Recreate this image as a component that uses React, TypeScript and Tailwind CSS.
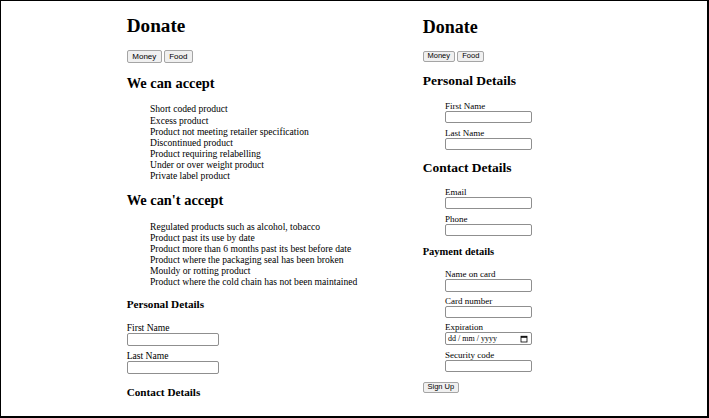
const serif = "font-['Liberation_Serif','Times_New_Roman',serif]";

const leftItemsCan = [
  'Short coded product',
  'Excess product',
  'Product not meeting retailer specification',
  'Discontinued product',
  'Product requiring relabelling',
  'Under or over weight product',
  'Private label product',
];

const leftItemsCant = [
  'Regulated products such as alcohol, tobacco',
  'Product past its use by date',
  'Product more than 6 months past its best before date',
  'Product where the packaging seal has been broken',
  'Mouldy or rotting product',
  'Product where the cold chain has not been maintained',
];

// left screenshot is rendered a bit bigger than the right one
const btnLeft =
  "h-[12.4px] px-[4.6px] bg-[#f0f0f0] border border-[#a5a5a5] rounded-[2px] text-[8px] leading-[9px] text-black font-['Liberation_Sans',Arial,sans-serif]";
const btnRight =
  "h-[11.4px] px-[3.8px] bg-[#f0f0f0] border border-[#a5a5a5] rounded-[2px] text-[7.5px] leading-[8px] text-black font-['Liberation_Sans',Arial,sans-serif]";
const inputLeft = 'block w-[92.5px] h-[12.4px] bg-white border border-[#8f8f8f] rounded-[2px] outline-none';
const inputRight = 'block w-[86.7px] h-[12.3px] bg-white border border-[#8f8f8f] rounded-[2px] outline-none';

function RightField({ label, mt }: { label: string; mt: string }) {
  return (
    <div className={mt}>
      <div className="text-[9px] leading-[10px]">{label}</div>
      <input type="text" className={inputRight} />
    </div>
  );
}

function CalendarIcon() {
  return (
    <svg width="8" height="8" viewBox="0 0 16 16" fill="none">
      <rect x="2" y="2.5" width="12" height="11.5" stroke="black" strokeWidth="1.6" />
      <rect x="2" y="2.5" width="12" height="3" fill="black" />
    </svg>
  );
}

export default function App() {
  return (
    <div className={`w-[709px] h-[418px] bg-white text-black border-l border-t border-r-2 border-b-2 border-black overflow-hidden flex ${serif}`}>
      {/* left page: food form */}
      <div className="w-[296px] shrink-0 pl-[125.7px] whitespace-nowrap flex flex-col items-start">
        <h1 className="mt-[14.2px] text-[19.2px] leading-[22px] font-bold">Donate</h1>
        <div className="mt-[13.1px] flex gap-[1.7px]">
          <button className={btnLeft}>Money</button>
          <button className={btnLeft}>Food</button>
        </div>
        <h2 className="mt-[12.2px] text-[14.4px] leading-[17px] font-bold">We can accept</h2>
        <ul className="mt-[11.6px] pl-[23.3px] text-[9.6px] leading-[11.04px]">
          {leftItemsCan.map((item) => (
            <li key={item}>{item}</li>
          ))}
        </ul>
        <h2 className="mt-[11.5px] text-[14.4px] leading-[17px] font-bold">We can't accept</h2>
        <ul className="mt-[11.9px] pl-[23.3px] text-[9.6px] leading-[11.04px]">
          {leftItemsCant.map((item) => (
            <li key={item}>{item}</li>
          ))}
        </ul>
        <h3 className="mt-[10.6px] text-[11.2px] leading-[13px] font-bold">Personal Details</h3>
        <div className="mt-[11.3px] text-[9.6px] leading-[11px]">First Name</div>
        <input type="text" className={inputLeft} />
        <div className="mt-[4.6px] text-[9.6px] leading-[11px]">Last Name</div>
        <input type="text" className={inputLeft} />
        <h3 className="mt-[12px] text-[11.2px] leading-[13px] font-bold">Contact Details</h3>
      </div>

      {/* right page: money form */}
      <div className="flex-1 pl-[125.7px] whitespace-nowrap flex flex-col items-start">
        <h1 className="mt-[15.7px] text-[18px] leading-[21px] font-bold">Donate</h1>
        <div className="mt-[13px] flex gap-[2.7px]">
          <button className={btnRight}>Money</button>
          <button className={btnRight}>Food</button>
        </div>
        <h2 className="mt-[11.4px] text-[13.5px] leading-[16px] font-bold">Personal Details</h2>
        <div className="pl-[22.3px]">
          <RightField label="First Name" mt="mt-[11.6px]" />
          <RightField label="Last Name" mt="mt-[4.4px]" />
        </div>
        <h2 className="mt-[10.1px] text-[13.5px] leading-[16px] font-bold">Contact Details</h2>
        <div className="pl-[22.3px]">
          <RightField label="Email" mt="mt-[10.9px]" />
          <RightField label="Phone" mt="mt-[4.4px]" />
        </div>
        <h3 className="mt-[9.5px] text-[10.5px] leading-[12px] font-bold">Payment details</h3>
        <div className="pl-[22.3px]">
          <RightField label="Name on card" mt="mt-[11.8px]" />
          <RightField label="Card number" mt="mt-[4.4px]" />
          <div className="mt-[3.7px]">
            <div className="text-[9px] leading-[10px]">Expiration</div>
            <div className="w-[86.7px] h-[13.3px] bg-white border border-[#8f8f8f] rounded-[2px] flex items-center justify-between pl-[2px] pr-[3px]">
              <span className="text-[8px] leading-[8px]">dd / mm / yyyy</span>
              <CalendarIcon />
            </div>
          </div>
          <RightField label="Security code" mt="mt-[4.7px]" />
        </div>
        <button className={`mt-[9.4px] ${btnRight}`}>Sign Up</button>
      </div>
    </div>
  );
}
